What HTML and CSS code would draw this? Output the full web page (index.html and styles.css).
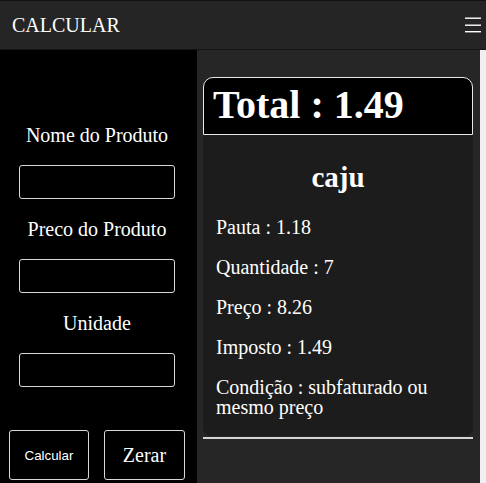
FILE: index.html
```html
<!DOCTYPE html>
<html lang="pt">
<head>
<meta charset="utf-8">
<title>Calcular</title>
<link rel="stylesheet" href="styles.css">
</head>
<body>
<header class="topbar">
  <span class="brand">CALCULAR</span>
  <svg class="menu-icon" width="16" height="16" viewBox="0 0 16 16" aria-hidden="true">
    <rect x="0" y="0.5" width="16" height="1.4" fill="#fff"/>
    <rect x="0" y="7.5" width="16" height="1.4" fill="#fff"/>
    <rect x="0" y="14" width="16" height="1.4" fill="#fff"/>
  </svg>
</header>
<main class="layout">
  <section class="form-panel">
    <div class="field">
      <label class="field-label" for="nome">Nome do Produto</label>
      <input class="field-input" id="nome" type="text">
    </div>
    <div class="field">
      <label class="field-label" for="preco">Preco do Produto</label>
      <input class="field-input" id="preco" type="text">
    </div>
    <div class="field">
      <label class="field-label" for="unidade">Unidade</label>
      <input class="field-input" id="unidade" type="text">
    </div>
    <div class="actions">
      <button class="btn btn-calc" type="button">Calcular</button>
      <button class="btn btn-reset" type="button">Zerar</button>
    </div>
  </section>
  <section class="result-panel">
    <div class="card">
      <h1 class="total">Total : 1.49</h1>
      <div class="card-body">
        <h2 class="product">caju</h2>
        <p class="item">Pauta : 1.18</p>
        <p class="item">Quantidade : 7</p>
        <p class="item">Preço : 8.26</p>
        <p class="item">Imposto : 1.49</p>
        <p class="item">Condição : subfaturado ou mesmo preço</p>
      </div>
      <div class="card-rule"></div>
    </div>
  </section>
</main>
</body>
</html>
```

FILE: styles.css
```css
* { box-sizing: border-box; }

html, body {
  margin: 0;
  padding: 0;
}

body {
  background: #f0f0f0;
  font-family: "Liberation Serif", "Times New Roman", serif;
  color: #fff;
  height: 483px;
  overflow: hidden;
}

.topbar {
  height: 50px;
  background: #252525;
  border-top: 1px solid #111;
  border-bottom: 1px solid #141414;
  display: flex;
  align-items: center;
  justify-content: space-between;
  padding: 0 5px 0 12px;
}

.brand {
  font-size: 20px;
  line-height: 23px;
}

.menu-icon {
  display: block;
}

.layout {
  display: grid;
  grid-template-columns: 197px 283px;
  height: 433px;
}

.form-panel {
  background: #000;
  padding-top: 74px;
  display: flex;
  flex-direction: column;
}

.field {
  display: flex;
  flex-direction: column;
  align-items: center;
  margin-bottom: 19px;
  padding-right: 3px;
}

.field-label {
  font-size: 20px;
  line-height: 23px;
  margin-bottom: 18px;
}

.field-input {
  width: 156px;
  height: 34px;
  background: #000;
  border: 1px solid #d8d8d8;
  border-radius: 3px;
  color: #fff;
  padding: 0 6px;
}

.actions {
  display: flex;
  gap: 15px;
  padding-left: 9px;
  margin-top: 24px;
}

.btn {
  height: 50px;
  background: #000;
  color: #fff;
  border: 1px solid #d8d8d8;
  border-radius: 3px;
  padding: 0;
}

.btn-calc {
  width: 80px;
  font-family: "Liberation Sans", Arial, sans-serif;
  font-size: 13.33px;
}

.btn-reset {
  width: 81px;
  font-family: "Liberation Serif", "Times New Roman", serif;
  font-size: 20px;
}

.result-panel {
  background: #262626;
  padding: 27px 7px 0 6px;
}

.card {
  width: 270px;
}

.total {
  margin: 0;
  font-size: 40px;
  font-weight: bold;
  line-height: 46px;
  padding: 4px 9px 6px;
  background: #000;
  border: 1px solid #e8e8e8;
  border-radius: 10px 10px 0 0;
}

.card-body {
  background: #1c1c1c;
  padding: 0 13px;
  display: flow-root;
  border-radius: 0 0 8px 8px;
}

.product {
  margin: 25px 0 23px;
  font-size: 29px;
  line-height: 34px;
  font-weight: bold;
  text-align: center;
}

.item {
  margin: 20px 0;
  font-size: 20px;
  line-height: 20px;
}

.item:last-child {
  margin-bottom: 19px;
}

.card-rule {
  height: 2px;
  margin-top: 1px;
  background: #d4d4d4;
}
```
